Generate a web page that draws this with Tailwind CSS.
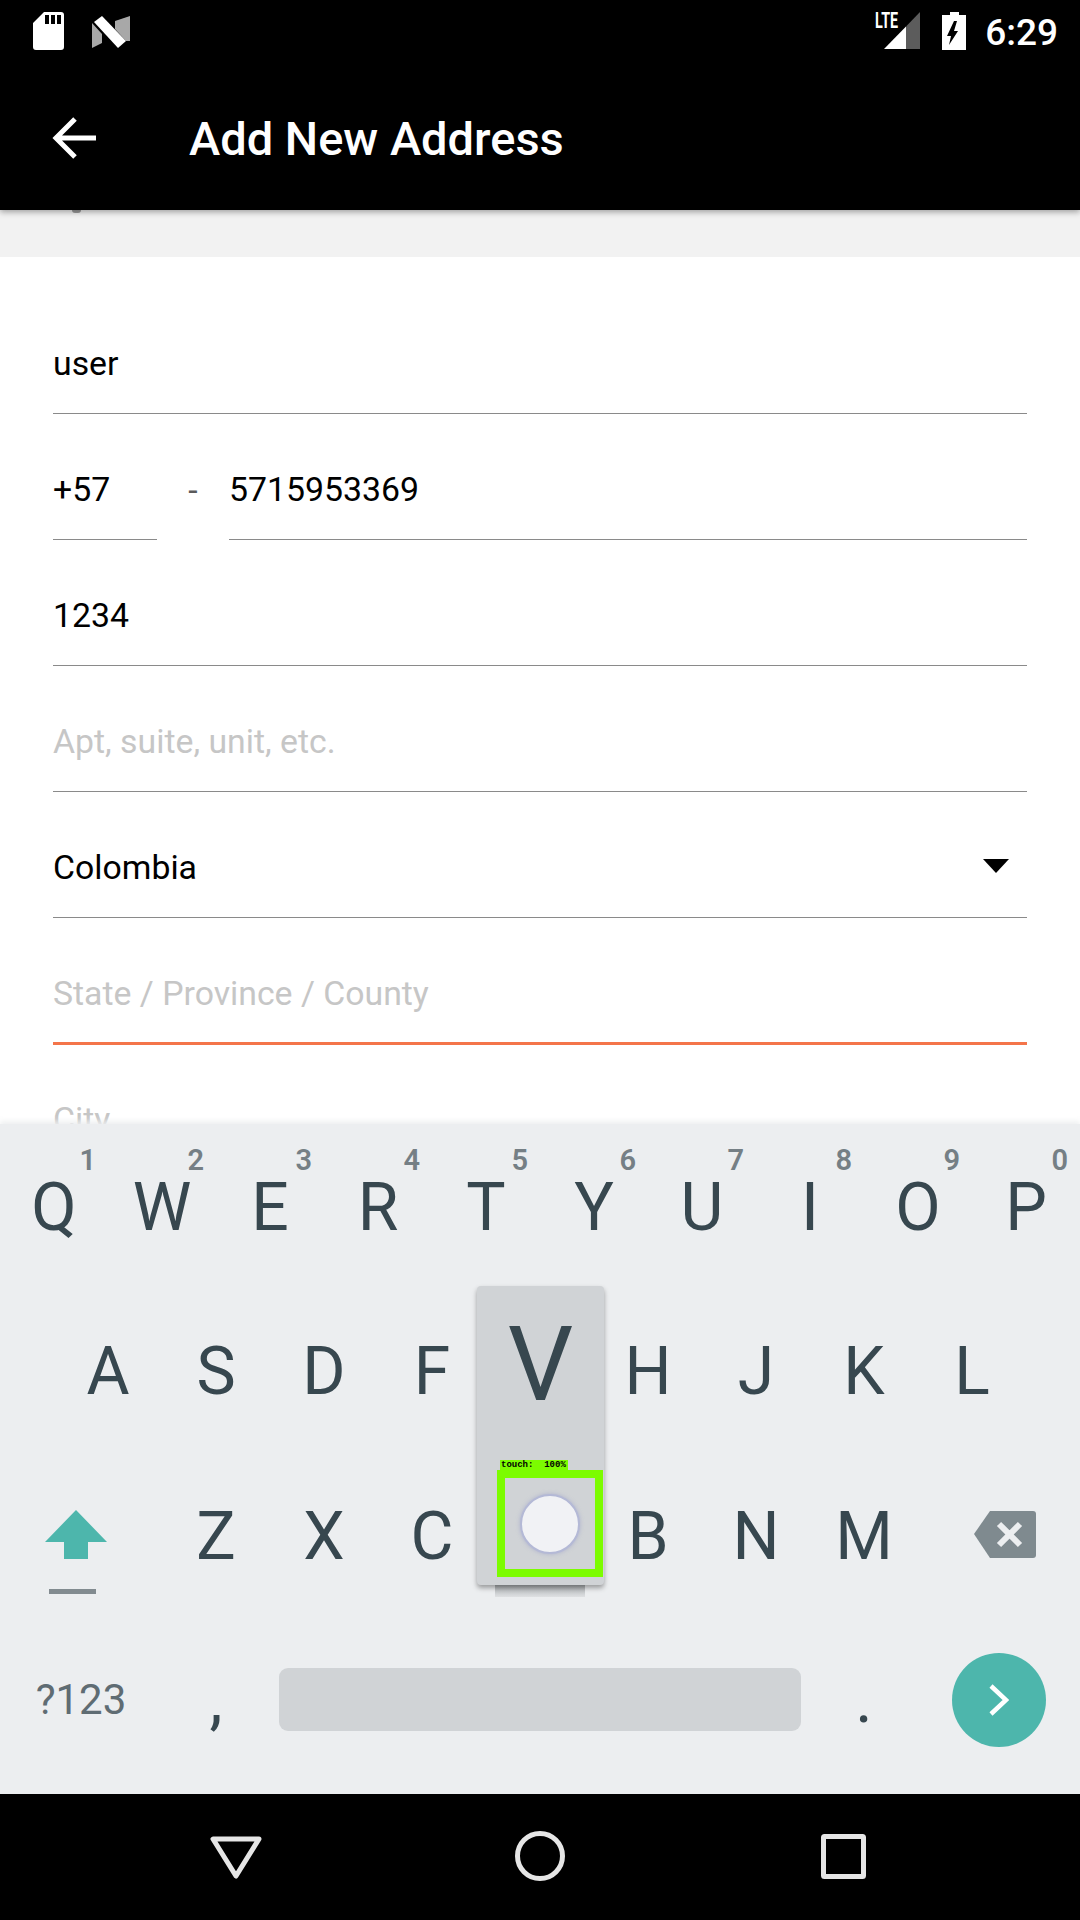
<!DOCTYPE html>
<html lang="en">
<head>
    <meta charset="UTF-8">
    <meta name="viewport" content="width=device-width, initial-scale=1.0">
    <title>Add New Address</title>
    <script src="https://cdn.jsdelivr.net/npm/@tailwindcss/browser@4"></script>
</head>
<body class="bg-black">
<div class="relative flex flex-col w-[1080px] h-[1920px] overflow-hidden font-['Roboto',sans-serif] bg-white">

    <!-- status bar -->
    <div class="relative z-20 h-[72px] bg-black text-white flex items-start justify-between pl-[33px] pr-[22px] pt-[12px]">
        <div class="flex items-start gap-[28px]">
            <svg class="w-[31px] h-[38px]" viewBox="0 0 31 38"><path fill="#fff" fill-rule="evenodd" d="M11 0h17a3 3 0 0 1 3 3v32a3 3 0 0 1-3 3H3a3 3 0 0 1-3-3V11zM12 3v9h4V3zM18 3v9h4V3zM24 3v9h4V3z"/></svg>
            <svg class="w-[38px] h-[32px] mt-[4px]" viewBox="0 0 38 32"><path fill="#a8a8a8" d="M0 7l10 11v9L0 32zM23 5L38 0v25h-4L23 13z"/><path fill="#fff" d="M2 6l8-6 24 25-8 7z"/></svg>
        </div>
        <div class="flex items-start">
            <div class="relative w-[45px] h-[38px]">
                <svg class="absolute left-[9px] top-0 w-[36px] h-[37px]" viewBox="0 0 36 37"><path fill="#5c5c5c" d="M22 14.4L36 0v37H22z"/><path fill="#fff" d="M0 37L22 14.4V37z"/></svg>
                <span class="absolute left-0 top-[1px] text-[22px] leading-[16px] font-bold scale-x-[0.65] origin-left">LTE</span>
            </div>
            <svg class="w-[24px] h-[38px] ml-[22px]" viewBox="0 0 24 38"><path fill="#fff" fill-rule="evenodd" d="M8 0h9v3h7v35H0V3h8zM12 9L5 24h4l-2 9 9-14h-4l3-10z"/></svg>
            <span class="ml-[19px] text-[37px] leading-[42px] font-medium">6:29</span>
        </div>
    </div>

    <!-- app bar -->
    <div class="relative z-20 h-[138px] pb-[6px] bg-black text-white flex items-center shadow-[0_2px_6px_rgba(0,0,0,0.35)]">
        <svg class="w-[44px] h-[44px] ml-[52px]" viewBox="0 0 44 44" fill="none" stroke="#fff" stroke-width="5"><path d="M44 22H6M23 3L4 22l19 19"/></svg>
        <h1 class="ml-[93px] text-[47px] font-medium leading-none">Add New Address</h1>
    </div>

    <!-- form -->
    <div class="flex-1 min-h-0 overflow-hidden">
        <div class="relative h-[47px] bg-[#f2f2f2]">
            <span class="absolute left-[72px] top-0 w-[9px] h-[3px] rounded-b-full bg-[#9b9b9b]"></span>
        </div>
        <div class="pt-[31px] px-[53px] text-[33.8px] text-black">
            <div class="h-[126px] flex items-end pb-[23px] border-b border-[#8a8a8a]">user</div>
            <div class="h-[126px] flex items-end">
                <div class="w-[104px] h-full flex items-end pb-[23px] border-b border-[#8a8a8a]">+57</div>
                <div class="w-[72px] pb-[23px] text-center text-[#5a5a5a]">-</div>
                <div class="flex-1 h-full flex items-end pb-[23px] border-b border-[#8a8a8a]">5715953369</div>
            </div>
            <div class="h-[126px] flex items-end pb-[23px] border-b border-[#8a8a8a]">1234</div>
            <div class="h-[126px] flex items-end pb-[23px] border-b border-[#8a8a8a] text-[#c6c6c6]">Apt, suite, unit, etc.</div>
            <div class="h-[126px] flex items-end justify-between pb-[23px] border-b border-[#8a8a8a]">
                <span>Colombia</span>
                <svg class="w-[26px] h-[14px] mr-[18px] mb-[21px]" viewBox="0 0 26 14"><path fill="#000" d="M0 0h26L13 14z"/></svg>
            </div>
            <div class="h-[127px] flex items-end pb-[22px] border-b-[3px] border-[#f4754a] text-[#c6c6c6]">State / Province / County</div>
            <div class="h-[126px] flex items-end pb-[25px] text-[#c6c6c6]">City</div>
        </div>
    </div>

    <!-- keyboard -->
    <div class="relative h-[670px] bg-[#eceef0] text-[#37474f] text-[66px] leading-none shadow-[0_-3px_5px_rgba(236,238,240,0.9)]">
        <div class="flex h-[165px] pt-[3px]">
            <div class="relative w-[108px] flex items-center justify-center">Q<span class="absolute right-[12px] top-[19px] text-[29px] font-semibold text-[#757f85]">1</span></div>
            <div class="relative w-[108px] flex items-center justify-center">W<span class="absolute right-[12px] top-[19px] text-[29px] font-semibold text-[#757f85]">2</span></div>
            <div class="relative w-[108px] flex items-center justify-center">E<span class="absolute right-[12px] top-[19px] text-[29px] font-semibold text-[#757f85]">3</span></div>
            <div class="relative w-[108px] flex items-center justify-center">R<span class="absolute right-[12px] top-[19px] text-[29px] font-semibold text-[#757f85]">4</span></div>
            <div class="relative w-[108px] flex items-center justify-center">T<span class="absolute right-[12px] top-[19px] text-[29px] font-semibold text-[#757f85]">5</span></div>
            <div class="relative w-[108px] flex items-center justify-center">Y<span class="absolute right-[12px] top-[19px] text-[29px] font-semibold text-[#757f85]">6</span></div>
            <div class="relative w-[108px] flex items-center justify-center">U<span class="absolute right-[12px] top-[19px] text-[29px] font-semibold text-[#757f85]">7</span></div>
            <div class="relative w-[108px] flex items-center justify-center">I<span class="absolute right-[12px] top-[19px] text-[29px] font-semibold text-[#757f85]">8</span></div>
            <div class="relative w-[108px] flex items-center justify-center">O<span class="absolute right-[12px] top-[19px] text-[29px] font-semibold text-[#757f85]">9</span></div>
            <div class="relative w-[108px] flex items-center justify-center">P<span class="absolute right-[12px] top-[19px] text-[29px] font-semibold text-[#757f85]">0</span></div>
        </div>
        <div class="flex h-[165px] pl-[54px]">
            <div class="w-[108px] flex items-center justify-center">A</div>
            <div class="w-[108px] flex items-center justify-center">S</div>
            <div class="w-[108px] flex items-center justify-center">D</div>
            <div class="w-[108px] flex items-center justify-center">F</div>
            <div class="w-[108px] flex items-center justify-center">G</div>
            <div class="w-[108px] flex items-center justify-center">H</div>
            <div class="w-[108px] flex items-center justify-center">J</div>
            <div class="w-[108px] flex items-center justify-center">K</div>
            <div class="w-[108px] flex items-center justify-center">L</div>
        </div>
        <div class="flex h-[165px]">
            <div class="w-[162px] pl-[45px] pt-[56px]">
                <svg class="w-[62px] h-[49px]" viewBox="0 0 62 49"><path fill="#4db6ac" d="M31 0l31 32H43v17H19V32H0z"/></svg>
                <div class="w-[47px] h-[5px] ml-[4px] mt-[30px] bg-[#828b90]"></div>
            </div>
            <div class="w-[108px] flex items-center justify-center">Z</div>
            <div class="w-[108px] flex items-center justify-center">X</div>
            <div class="w-[108px] flex items-center justify-center">C</div>
            <div class="w-[108px] flex items-center justify-center">V</div>
            <div class="w-[108px] flex items-center justify-center">B</div>
            <div class="w-[108px] flex items-center justify-center">N</div>
            <div class="w-[108px] flex items-center justify-center">M</div>
            <div class="w-[162px] pl-[56px] pt-[57px]">
                <svg class="w-[62px] h-[47px]" viewBox="0 0 62 47"><path fill="#7f8a8f" d="M16 0h43a3 3 0 0 1 3 3v41a3 3 0 0 1-3 3H16L0 23z"/><path fill="none" stroke="#eceef0" stroke-width="6" d="M25 13l21 21M46 13L25 34"/></svg>
            </div>
        </div>
        <div class="flex items-center h-[165px] pb-[4px]">
            <div class="w-[162px] flex items-center justify-center text-[42px] text-[#5f6c73]">?123</div>
            <div class="w-[108px] flex items-center justify-center">,</div>
            <div class="w-[540px] px-[9px]"><div class="h-[63px] rounded-[9px] bg-[#d0d3d6]"></div></div>
            <div class="w-[108px] flex items-center justify-center">.</div>
            <div class="w-[162px] flex items-center justify-center">
                <div class="w-[94px] h-[94px] rounded-full bg-[#4db6ac] flex items-center justify-center">
                    <svg class="w-[20px] h-[32px]" viewBox="0 0 20 32" fill="none" stroke="#fff" stroke-width="4.5"><path d="M2 2l15 14L2 30"/></svg>
                </div>
            </div>
        </div>

        <!-- key preview popup with touch overlay -->
        <div class="absolute left-[495px] top-[461px] w-[90px] h-[12px] bg-linear-to-b from-[#a9adb0] to-[#dfe1e3]"></div>
        <div class="absolute left-[477px] top-[162px] w-[127px] h-[299px] rounded-[4px] bg-[#d0d3d6] shadow-[0_3px_5px_rgba(0,0,0,0.35)] flex justify-center pt-[24px]">
            <span class="text-[103px] leading-[110px]">V</span>
        </div>
        <div class="absolute left-[497px] top-[346px] w-[106px] h-[107px] border-[8px] border-[#7cfc00] flex items-center justify-center">
            <div class="w-[60px] h-[60px] rounded-full bg-[#f1f2f5] border-[2px] border-[#b4b9d6] shadow-[0_0_4px_rgba(150,155,200,0.6)]"></div>
        </div>
        <div class="absolute left-[500px] top-[336px] w-[68px] h-[11px] bg-[#7cfc00] text-black font-['Liberation_Mono',monospace] font-bold text-[9px] leading-[11px] pl-[1px] whitespace-pre">touch:  100%</div>
    </div>

    <!-- nav bar -->
    <div class="relative z-20 h-[126px] bg-black flex items-start">
        <svg class="ml-[210px] mt-[41px] w-[52px] h-[44px]" viewBox="0 0 52 44" fill="none" stroke="#e6e6e6" stroke-width="5" stroke-linejoin="round"><path d="M3 4h46L26 41z"/></svg>
        <svg class="ml-[253px] mt-[37px] w-[50px] h-[50px]" viewBox="0 0 50 50" fill="none" stroke="#e6e6e6" stroke-width="5"><circle cx="25" cy="25" r="22.5"/></svg>
        <svg class="ml-[256px] mt-[40px] w-[45px] h-[45px]" viewBox="0 0 45 45" fill="none" stroke="#e6e6e6" stroke-width="5" stroke-linejoin="round"><rect x="2.5" y="2.5" width="40" height="40" rx="1"/></svg>
    </div>
</div>
</body>
</html>
